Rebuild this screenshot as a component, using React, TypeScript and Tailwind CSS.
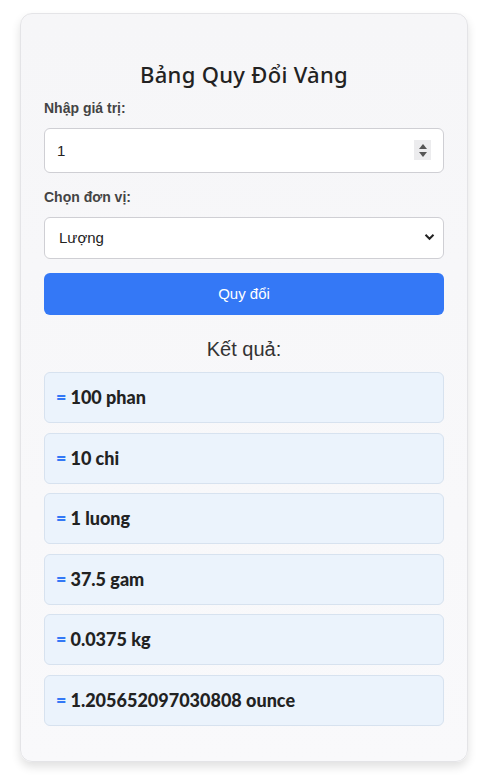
import React, { useState } from 'react';

const FACTORS: Record<string, number> = {
  phan: 0.375,
  chi: 3.75,
  luong: 37.5,
  gam: 1,
  kg: 1000,
  ounce: 31.1034768,
};

const UNITS = [
  { value: 'phan', label: 'Phân' },
  { value: 'chi', label: 'Chỉ' },
  { value: 'luong', label: 'Lượng' },
  { value: 'gam', label: 'Gam' },
  { value: 'kg', label: 'Kg' },
  { value: 'ounce', label: 'Ounce' },
];

const RESULTS = [
  '100 phan',
  '10 chi',
  '1 luong',
  '37.5 gam',
  '0.0375 kg',
  '1.205652097030808 ounce',
];

export default function App() {
  const [value, setValue] = useState('1');
  const [unit, setUnit] = useState('luong');
  const [results, setResults] = useState<string[]>(RESULTS);

  const convert = () => {
    const grams = parseFloat(value || '0') * FACTORS[unit];
    setResults(
      ['phan', 'chi', 'luong', 'gam', 'kg', 'ounce'].map((u) => {
        const n = u === 'ounce' ? grams / 31.1 : grams / FACTORS[u];
        return `${n} ${u}`;
      })
    );
  };

  return (
    <div className="min-h-screen bg-white pt-[13px] px-5 pb-4 font-['Liberation_Sans',Arial,sans-serif]">
      <div className="w-[448px] rounded-xl border border-[#e4e4e7] bg-gradient-to-b from-[#f6f6f8] to-[#f9f9fb] px-[23px] pt-[46px] pb-[35px] shadow-[0_5px_10px_rgba(0,0,0,0.12)]">
        {/* tiêu đề */}
        <h2 className="text-center text-[22px] font-medium leading-[28px] text-[#222] font-['Noto_Sans',sans-serif] tracking-[0.3px]">
          Bảng Quy Đổi Vàng
        </h2>

        <label className="mt-[11px] block text-[14px] font-bold leading-[18px] text-[#444]">
          Nhập giá trị:
        </label>
        <div className="relative mt-[11px]">
          <input
            type="number"
            value={value}
            onChange={(e) => setValue(e.target.value)}
            className="h-[45px] w-full rounded-md border border-[#cfcfd4] bg-white px-3 text-[15px] text-[#222] outline-none [appearance:textfield] [&::-webkit-inner-spin-button]:appearance-none"
          />
          <div className="pointer-events-none absolute right-[13px] top-[12px] flex h-[20px] w-[17px] flex-col items-center justify-center gap-[3px] bg-[#ececee]">
            <span className="h-0 w-0 border-x-[4px] border-b-[5px] border-x-transparent border-b-[#555]" />
            <span className="h-0 w-0 border-x-[4px] border-t-[5px] border-x-transparent border-t-[#555]" />
          </div>
        </div>

        <label className="mt-[15px] block text-[14px] font-bold leading-[18px] text-[#444]">
          Chọn đơn vị:
        </label>
        <div className="relative mt-[11px]">
          <select
            value={unit}
            onChange={(e) => setUnit(e.target.value)}
            className="h-[42px] w-full appearance-none rounded-md border border-[#cfcfd4] bg-white pl-[14px] pr-8 text-[15px] text-[#222] outline-none"
          >
            {UNITS.map((u) => (
              <option key={u.value} value={u.value}>
                {u.label}
              </option>
            ))}
          </select>
          <svg
            className="pointer-events-none absolute right-[9px] top-[16px]"
            width="11"
            height="8"
            viewBox="0 0 11 8"
            fill="none"
          >
            <path d="M1.5 1.8 5.5 5.8 9.5 1.8" stroke="#222" strokeWidth="2" />
          </svg>
        </div>

        <button
          onClick={convert}
          className="mt-[14px] h-[42px] w-full rounded-md bg-[#3478f6] text-[15px] text-white"
        >
          Quy đổi
        </button>

        <h3 className="mt-[22px] text-center text-[20px] leading-[24px] text-[#333]">Kết quả:</h3>

        <div className="mt-[11px] flex flex-col gap-[9.6px]">
          {results.map((r) => (
            <div
              key={r}
              className="flex h-[51px] items-center rounded-md border border-[#d7e2ef] bg-[#ebf3fc] px-[11px] text-[18px] font-black text-[#222] font-['Lato',sans-serif]"
            >
              <span className="mr-[4px] text-[#3478f6]">=</span>
              {r}
            </div>
          ))}
        </div>
      </div>
    </div>
  );
}
